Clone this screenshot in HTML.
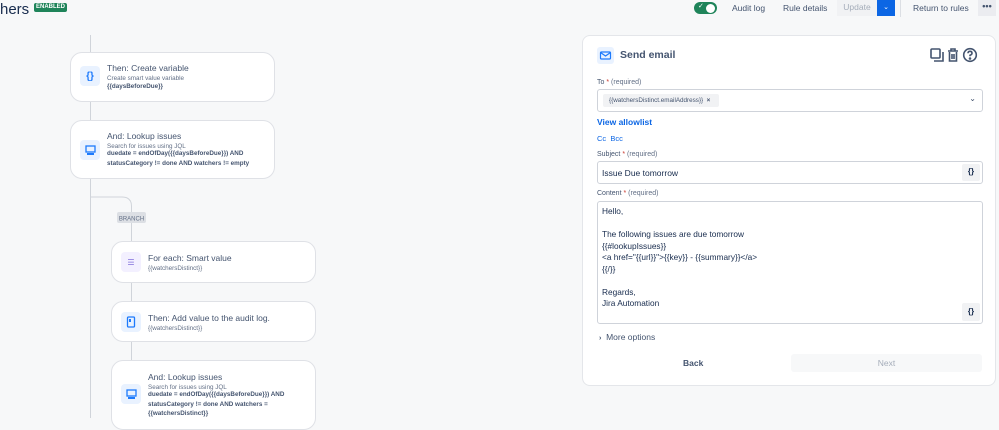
<!DOCTYPE html>
<html><head><meta charset="utf-8"><style>
*{box-sizing:border-box;margin:0;padding:0}
body{width:999px;height:418px;overflow:hidden;background:#f7f8f9;font-family:"Liberation Sans",sans-serif;color:#172b4d;position:relative}
.a{position:absolute}
.card{position:absolute;background:#fff;border:1px solid #dfe1e6;border-radius:12px}
.ic{position:absolute;left:9px;width:20px;height:20px;border-radius:4px;background:#e9f2ff;display:flex;align-items:center;justify-content:center}
.t{position:absolute;left:36px;font-size:8.5px;color:#44546f;white-space:nowrap}
.s{position:absolute;left:36px;font-size:6.3px;color:#626f86;white-space:nowrap}
.b{position:absolute;left:36px;font-size:6.3px;color:#44546f;font-weight:bold;line-height:9.5px;white-space:nowrap}
.lbl{position:absolute;left:14px;font-size:7px;color:#626f86}
.lbl b{font-weight:normal;color:#44546f}.lbl i{color:#c9372c;font-style:normal}
.inp{position:absolute;left:14px;width:386px;border:1.5px solid #cfd3da;border-radius:3px;background:#fff}
.btn{position:absolute;font-size:8.5px;color:#44546f}
</style></head><body>
<div class="a" style="left:0;top:1px;font-size:15px;color:#172b4d">hers</div>
<div class="a" style="left:34px;top:3px;width:33px;height:9px;background:#1f845a;border-radius:2px;color:#fff;font-size:6px;font-weight:bold;text-align:center;line-height:9px">ENABLED</div>

<svg class="a" style="left:0;top:0" width="580" height="418">
<g stroke="#d0d4da" stroke-width="1" fill="none">
<line x1="90.5" y1="35" x2="90.5" y2="418"/>
<path d="M90.5 197 H122 Q131.5 197 131.5 206 V212"/>
<line x1="131.5" y1="223" x2="131.5" y2="360"/>
</g>
<rect x="117" y="212" width="29" height="11" rx="2" fill="#dcdfe4"/>
<text x="131.5" y="220.5" font-size="6" fill="#626f86" text-anchor="middle" font-family="Liberation Sans">BRANCH</text>
</svg>

<div class="card" style="left:70px;top:52px;width:205px;height:50px">
<div class="ic" style="top:13px;color:#1d7afc;font-size:10px;font-weight:bold">{}</div>
<div class="t" style="top:10px">Then: Create variable</div>
<div class="s" style="top:22px">Create smart value variable</div>
<div class="b" style="top:29px">{{daysBeforeDue}}</div>
</div>
<div class="card" style="left:70px;top:120px;width:205px;height:59px">
<div class="ic" style="top:19px"><svg width="11" height="11"><rect x="1" y="1" width="9" height="6" fill="none" stroke="#1d7afc" stroke-width="1.3"/><rect x="2" y="8" width="7" height="2" fill="#1d7afc"/></svg></div>
<div class="t" style="top:10px">And: Lookup issues</div>
<div class="s" style="top:22px">Search for issues using JQL</div>
<div class="b" style="top:28px">duedate = endOfDay({{daysBeforeDue}}) AND<br>statusCategory != done AND watchers != empty</div>
</div>
<div class="card" style="left:111px;top:241px;width:205px;height:42px">
<div class="ic" style="top:10px;background:#f3f0ff;color:#8270db;font-size:8px">☰</div>
<div class="t" style="top:11px">For each: Smart value</div>
<div class="s" style="top:23px">{{watchersDistinct}}</div>
</div>
<div class="card" style="left:111px;top:301px;width:205px;height:41px">
<div class="ic" style="top:10px"><svg width="10" height="12"><rect x="1.5" y="1" width="7" height="10" rx="1" fill="none" stroke="#1d7afc" stroke-width="1.3"/><rect x="3" y="3" width="2" height="3" fill="#1d7afc"/></svg></div>
<div class="t" style="top:11px">Then: Add value to the audit log.</div>
<div class="s" style="top:23px">{{watchersDistinct}}</div>
</div>
<div class="card" style="left:111px;top:360px;width:205px;height:70px">
<div class="ic" style="top:23px"><svg width="11" height="11"><rect x="1" y="1" width="9" height="6" fill="none" stroke="#1d7afc" stroke-width="1.3"/><rect x="2" y="8" width="7" height="2" fill="#1d7afc"/></svg></div>
<div class="t" style="top:11px">And: Lookup issues</div>
<div class="s" style="top:23px">Search for issues using JQL</div>
<div class="b" style="top:29px">duedate = endOfDay({{daysBeforeDue}}) AND<br>statusCategory != done AND watchers =<br>{{watchersDistinct}}</div>
</div>

<!-- top bar -->
<div class="a" style="left:694px;top:2px;width:23px;height:12px;border-radius:6px;background:#1f845a"><div class="a" style="left:12px;top:1.5px;width:9px;height:9px;border-radius:50%;background:#fff"></div><div class="a" style="left:4px;top:0px;color:#fff;font-size:7px">✓</div></div>
<div class="btn" style="left:732px;top:3px">Audit log</div>
<div class="btn" style="left:783px;top:3px">Rule details</div>
<div class="a" style="left:837px;top:0;width:40px;height:16px;background:#f1f2f4;color:#a5adba;font-size:8.5px;text-align:center;line-height:15px">Update</div>
<div class="a" style="left:877px;top:0;width:18px;height:16px;background:#0c66e4;color:#fff;font-size:7px;text-align:center;line-height:15px">⌄</div>
<div class="a" style="left:900px;top:0;width:1px;height:17px;background:#dcdfe4"></div>
<div class="btn" style="left:913px;top:3px">Return to rules</div>
<div class="a" style="left:978px;top:0;width:18px;height:16px;background:#ebecf0;color:#44546f;font-size:9px;text-align:center;line-height:12px;font-weight:bold">•••</div>

<!-- panel -->
<div class="a" style="left:582px;top:35px;width:414px;height:351px;background:#fff;border:1px solid #e4e6ea;border-radius:8px">
<div class="a" style="left:14px;top:11px;width:17px;height:17px;background:#e9f2ff;border-radius:3px"><svg width="17" height="17"><rect x="3.5" y="5" width="10" height="7" rx="1" fill="none" stroke="#1d7afc" stroke-width="1.2"/><path d="M3.5 5.5 L8.5 9 L13.5 5.5" fill="none" stroke="#1d7afc" stroke-width="1.2"/></svg></div>
<div class="a" style="left:37px;top:13px;font-size:10.5px;font-weight:bold;color:#44546f">Send email</div>
<svg class="a" style="left:347px;top:11px" width="50" height="16" fill="none" stroke="#44546f" stroke-width="1.6">
<rect x="1" y="2" width="9" height="9" rx="1"/><path d="M4 14 H13 V5"/>
<path d="M18 4 H28 M21 4 V2 H25 V4 M19.5 5 V14 H26.5 V5 M22 7 V12 M24 7 V12"/>
<circle cx="40" cy="8" r="6.3"/><path d="M38 6.3 Q38 4.3 40 4.3 Q42 4.3 42 6.2 Q42 7.5 40 8.3 V9.3"/><circle cx="40" cy="11.5" r=".5" fill="#44546f"/>
</svg>
<div class="lbl" style="top:43px"><b>To</b> <i>*</i> (required)</div>
<div class="inp" style="top:53px;height:23px"><div class="a" style="left:5px;top:4px;width:116px;height:13px;background:#f1f2f4;border-radius:2px;font-size:6.3px;color:#44546f;line-height:13px;padding-left:6px">{{watchersDistinct.emailAddress}} &nbsp;<b>×</b></div><div class="a" style="right:6px;top:4px;font-size:8px;color:#44546f">⌄</div></div>
<div class="a" style="left:14px;top:81px;font-size:8.5px;font-weight:bold;color:#0c66e4">View allowlist</div>
<div class="a" style="left:14px;top:98px;font-size:7.5px;color:#0c66e4">Cc &nbsp;Bcc</div>
<div class="lbl" style="top:115px"><b>Subject</b> <i>*</i> (required)</div>
<div class="inp" style="top:125px;height:23px"><div class="a" style="left:4px;top:6px;font-size:8.5px;color:#172b4d">Issue Due tomorrow</div><div class="a" style="right:2px;top:2px;width:18px;height:17px;background:#f1f2f4;border-radius:2px;font-size:8px;font-weight:bold;text-align:center;line-height:16px">{}</div></div>
<div class="lbl" style="top:154px"><b>Content</b> <i>*</i> (required)</div>
<div class="inp" style="top:165px;height:123px"><div class="a" style="left:4px;top:4px;font-size:8.3px;line-height:11.5px;color:#172b4d;white-space:pre">Hello,

The following issues are due tomorrow
{{#lookupIssues}}
&lt;a href="{{url}}"&gt;{{key}} - {{summary}}&lt;/a&gt;
{{/}}

Regards,
Jira Automation</div><div class="a" style="right:2px;top:101px;width:18px;height:18px;background:#f1f2f4;border-radius:2px;font-size:8px;font-weight:bold;text-align:center;line-height:17px">{}</div></div>
<div class="a" style="left:16px;top:296px;font-size:8.5px;color:#44546f"><b style="font-size:7px">›</b>&nbsp; More options</div>
<div class="a" style="left:100px;top:322px;font-size:8.5px;font-weight:bold;color:#44546f">Back</div>
<div class="a" style="left:208px;top:318px;width:191px;height:18px;background:#f7f8f9;border-radius:3px;font-size:8.5px;color:#a5adba;text-align:center;line-height:18px">Next</div>
</div>
</body></html>
